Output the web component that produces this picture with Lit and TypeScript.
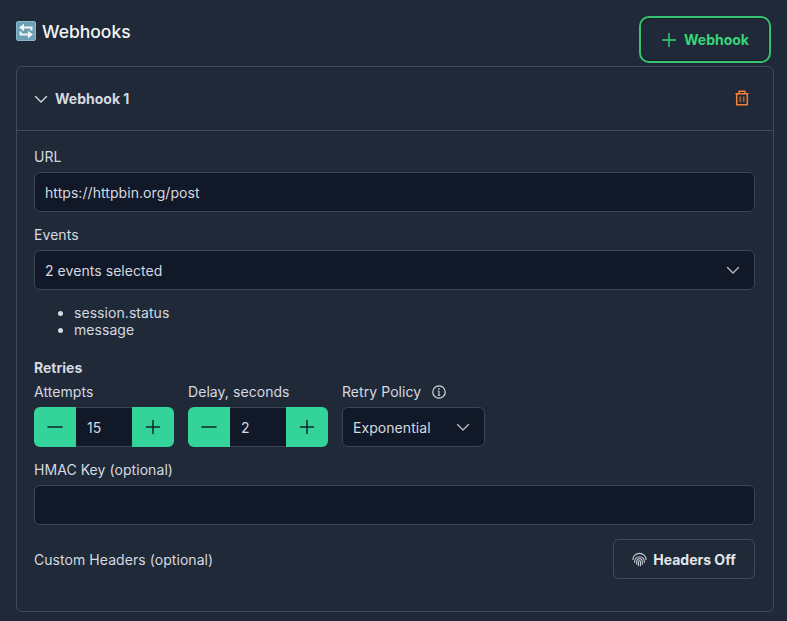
import { LitElement, html, css } from "lit";
import { customElement } from "lit/decorators.js";

const minus = html`<svg width="16" height="16" viewBox="0 0 16 16" fill="none" stroke="#0f2a2a" stroke-width="1.5" stroke-linecap="round"><path d="M1 8h14"/></svg>`;
const plus = html`<svg width="16" height="16" viewBox="0 0 16 16" fill="none" stroke="#0f2a2a" stroke-width="1.5" stroke-linecap="round"><path d="M1.5 8h13M8 1.5v13"/></svg>`;
const chevron = html`<svg width="14" height="14" viewBox="0 0 14 14" fill="none" stroke="currentColor" stroke-width="1.4" stroke-linecap="round" stroke-linejoin="round"><path d="M1.5 4.500 7 10l5.500-5.500"/></svg>`;

@customElement("app-root")
export class AppRoot extends LitElement {
  static styles = css`
    :host { display: block; width: 787px; height: 621px; overflow: hidden; background: #1f2937; color: #d5d9e0; font-family: Inter, "Liberation Sans", sans-serif; font-size: 14px; letter-spacing: .06px; box-sizing: border-box; padding: 16px 13px 0 16px; }
    * { box-sizing: border-box; }
    .top { display: flex; justify-content: space-between; align-items: flex-start; height: 50px; }
    .title { display: flex; align-items: center; gap: 5px; height: 30px; font-size: 17.5px; font-weight: 500; color: #f3f4f6; letter-spacing: 0; }
    .add { width: 132px; height: 47px; margin-right: 3px; border: 2px solid #36c46f; border-radius: 10px; background: #1f2937; color: #37d67a; display: flex; align-items: center; justify-content: center; gap: 7px; font-weight: 700; font-size: 14px; box-shadow: inset 0 0 0 1px #15202b; letter-spacing: 0; }
    .card { width: 758px; height: 546px; border: 1px solid #414b59; border-radius: 6px; }
    .head { height: 64px; border-bottom: 1px solid #414b59; padding: 0 24px 0 17px; display: flex; align-items: center; justify-content: space-between; }
    .head-l { display: flex; align-items: center; gap: 7px; font-weight: 700; font-size: 14px; color: #d5d9e0; letter-spacing: 0; }
    .body { padding: 16px 18px 0 17px; display: flex; flex-direction: column; }
    .label { height: 20px; line-height: 20px; font-size: 14px; margin-bottom: 5px; color: #d5d9e0; }
    .field { height: 40px; background: #111827; border: 1px solid #3b4554; border-radius: 6px; padding: 0 14px 0 10px; display: flex; align-items: center; justify-content: space-between; font-size: 14px; color: #d5d9e0; margin-bottom: 13px; }
    .field svg { color: #b5bbc5; }
    ul { margin: 2px 0 20px; padding: 0 0 0 40px; line-height: 17px; font-size: 14px; }
    .retries { font-weight: 700; font-size: 14px; height: 20px; line-height: 20px; margin-bottom: 4px; letter-spacing: 0; }
    .row { display: flex; gap: 14px; margin-bottom: 13px; }
    .group .label { display: flex; align-items: center; gap: 11px; }
    .stepper { display: flex; width: 140px; height: 40px; }
    .btn { width: 42px; display: flex; align-items: center; justify-content: center; background: #34d399; }
    .btn.l { border-radius: 6px 0 0 6px; }
    .btn.r { border-radius: 0 6px 6px 0; }
    .num { flex: 1; background: #111827; border-top: 1px solid #3b4554; border-bottom: 1px solid #3b4554; padding-left: 11px; display: flex; align-items: center; font-size: 14px; }
    .policy { width: 143px; margin: 0; }
    .foot { display: flex; justify-content: space-between; align-items: center; height: 40px; }
    .hbtn { width: 142px; height: 40px; border: 1px solid #414b59; border-radius: 6px; display: flex; align-items: center; justify-content: center; gap: 6px; font-weight: 700; font-size: 14px; color: #e2e5ea; letter-spacing: 0; }
    .hmac { margin-bottom: 14px; }
    .events { margin-bottom: 12px; }
    .trash { margin: 0 -1px 2px 0; }
  `;

  stepper(v: string) {
    return html`<div class="stepper"><div class="btn l">${minus}</div><div class="num">${v}</div><div class="btn r">${plus}</div></div>`;
  }

  render() {
    return html`
      <div class="top">
        <div class="title">
          <svg width="21" height="21" viewBox="0 0 21 21">
            <rect x=".5" y=".5" width="19" height="19" rx="1.500" fill="#6d9fb5" stroke="#8ab8cb"/>
            <path d="M6.500 6.500H15.500V9.500M13.500 13.500H4.500V10.500" fill="none" stroke="#f2f5f7" stroke-width="2"/>
            <path d="M8 2.800v7.400L3 6.500zM12 9.800v7.400l5-3.700z" fill="#f2f5f7"/>
          </svg>
          <span>Webhooks</span>
        </div>
        <div class="add">
          <svg width="16" height="16" viewBox="0 0 16 16" fill="none" stroke="#37d67a" stroke-width="1.4" stroke-linecap="round"><path d="M1.500 8h13M8 1.500v13"/></svg>
          <span>Webhook</span>
        </div>
      </div>
      <div class="card">
        <div class="head">
          <div class="head-l">${chevron}<span>Webhook 1</span></div>
          <svg class="trash" width="16" height="16" viewBox="0 0 16 16" fill="none" stroke="#f58035" stroke-width="1.500" stroke-linejoin="round"><path d="M1.500 3.800h13M5 3.800V1.200h6v2.600M2.700 3.800v10.900h10.600V3.800"/><path d="M6.300 6.500v5.500M9.700 6.500v5.500" stroke-width="1.700" stroke-opacity=".65"/></svg>
        </div>
        <div class="body">
          <div class="label">URL</div>
          <div class="field">https://httpbin.org/post</div>
          <div class="label">Events</div>
          <div class="field events"><span>2 events selected</span>${chevron}</div>
          <ul><li>session.status</li><li>message</li></ul>
          <div class="retries">Retries</div>
          <div class="row">
            <div class="group"><div class="label">Attempts</div>${this.stepper("15")}</div>
            <div class="group"><div class="label">Delay, seconds</div>${this.stepper("2")}</div>
            <div class="group">
              <div class="label"><span>Retry Policy</span>
                <svg width="14" height="14" viewBox="0 0 14 14" fill="none" stroke="#d5d9e0" stroke-width="1.200"><circle cx="7" cy="7" r="6.200"/><path d="M7 6v4M5.800 10.200h2.400M5.800 6h1.200" stroke-width="1.100"/><circle cx="7" cy="3.900" r=".8" fill="#d5d9e0" stroke="none"/></svg>
              </div>
              <div class="field policy"><span>Exponential</span>${chevron}</div>
            </div>
          </div>
          <div class="label">HMAC Key (optional)</div>
          <div class="field hmac"></div>
          <div class="foot">
            <span>Custom Headers (optional)</span>
            <div class="hbtn">
              <svg width="15" height="15" viewBox="0 0 16 16" fill="none" stroke="#c4c9d1" stroke-width="1.200" stroke-linecap="round"><path d="M1 8a7 6.500 0 0 1 14 0M2.800 11c0-4 2-6 5.200-6s5.200 2 5.200 6M5 13c-.3-4 .5-6 3-6s3.300 2 3 6M7 14.500c-.3-3-.2-5.500 1-5.500s1.300 2.500 1 5.500"/></svg>
              <span>Headers Off</span>
            </div>
          </div>
        </div>
      </div>
    `;
  }
}
